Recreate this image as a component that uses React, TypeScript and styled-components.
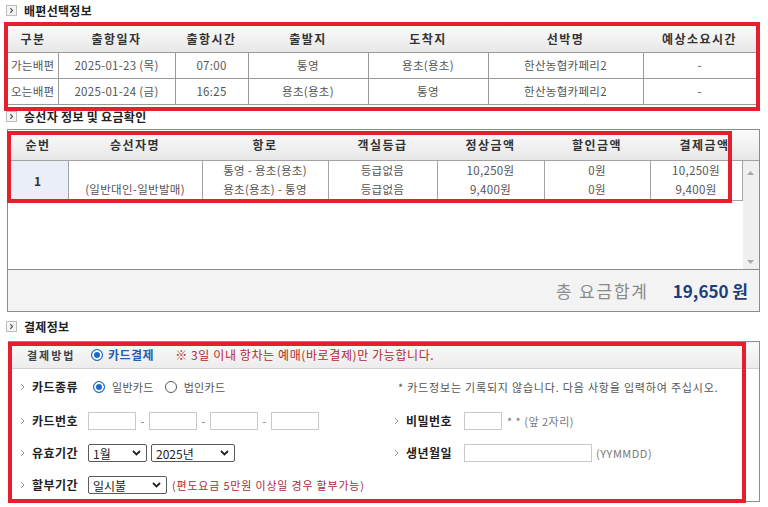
import { createGlobalStyle, styled } from 'styled-components';

const GlobalStyle = createGlobalStyle`
  html, body {
    margin: 0;
    padding: 0;
    background: #fff;
  }
  body {
    font-family: 'Noto Sans CJK KR', 'Noto Sans', sans-serif;
    color: #444;
  }
  * {
    box-sizing: border-box;
  }
`;

const scheduleHeads = ['구분', '출항일자', '출항시간', '출발지', '도착지', '선박명', '예상소요시간'];
const scheduleCols = [50, 117, 73, 120, 120, 155, 113];
const schedules = [
  ['가는배편', '2025-01-23 (목)', '07:00', '통영', '용초(용초)', '한산농협카페리2', '-'],
  ['오는배편', '2025-01-24 (금)', '16:25', '용초(용초)', '통영', '한산농협카페리2', '-'],
];

const fareHeads = ['순번', '승선자명', '항로', '객실등급', '정상금액', '할인금액', '결제금액'];
const fareCols = [60, 134, 126, 109, 107, 106, 92];
const fareLegs = [
  { route: '통영 - 용초(용초)', grade: '등급없음', normal: '10,250원', discount: '0원', pay: '10,250원' },
  { route: '용초(용초) - 통영', grade: '등급없음', normal: '9,400원', discount: '0원', pay: '9,400원' },
];

const TitleIcon = () => (
  <svg width="11" height="11" viewBox="0 0 11 11">
    <rect x="0.5" y="0.5" width="10" height="10" fill="#f5f5f5" stroke="#bcbcbc" />
    <path d="M4.3 3.2 L6.5 5.5 L4.3 7.8" fill="none" stroke="#555" strokeWidth="1.2" />
  </svg>
);

const Chevron = () => (
  <svg width="5" height="8" viewBox="0 0 5 8">
    <path d="M1 1 L4 4 L1 7" fill="none" stroke="#9a9a9a" strokeWidth="1" />
  </svg>
);

const SelectArrow = () => (
  <svg width="9" height="6" viewBox="0 0 9 6">
    <path d="M1 1 L4.5 4.5 L8 1" fill="none" stroke="#222" strokeWidth="1.8" />
  </svg>
);

const ScrollArrow = ({ down }: { down?: boolean }) => (
  <svg width="7" height="4" viewBox="0 0 7 4">
    <path d={down ? 'M0 0 L7 0 L3.5 4 Z' : 'M0 4 L7 4 L3.5 0 Z'} fill="#a9a9a9" />
  </svg>
);

const App = () => {
  return (
    <Page>
      <GlobalStyle />

      <SectionTitle $mt={1} $mb={3}>
        <TitleIcon />
        배편선택정보
      </SectionTitle>
      <RedFrame>
        <Grid>
          <colgroup>
            {scheduleCols.map((w, i) => (
              <col key={i} style={{ width: w }} />
            ))}
          </colgroup>
          <thead>
            <tr>
              {scheduleHeads.map((h) => (
                <HeadCell key={h} $height={26}>
                  {h}
                </HeadCell>
              ))}
            </tr>
          </thead>
          <tbody>
            {schedules.map((row) => (
              <tr key={row[0]}>
                {row.map((v, i) => (
                  <ScheduleCell key={i}>{v}</ScheduleCell>
                ))}
              </tr>
            ))}
          </tbody>
        </Grid>
      </RedFrame>

      <SectionTitle $mt={-3} $mb={3}>
        <TitleIcon />
        승선자 정보 및 요금확인
      </SectionTitle>
      <FareBox>
        <FareHead>
          <Grid>
            <colgroup>
              {fareCols.slice(0, 6).map((w, i) => (
                <col key={i} style={{ width: w }} />
              ))}
              <col />
            </colgroup>
            <thead>
              <tr>
                {fareHeads.map((h) => (
                  <HeadCell key={h} $height={30} $plain>
                    {h}
                  </HeadCell>
                ))}
              </tr>
            </thead>
          </Grid>
        </FareHead>
        <FareBody>
          <FareScroll>
            <Grid>
              <colgroup>
                {fareCols.map((w, i) => (
                  <col key={i} style={{ width: w }} />
                ))}
              </colgroup>
              <tbody>
                <tr>
                  <FareCell $seq>1</FareCell>
                  <FareCell>
                    <Line />
                    <Line>(일반대인-일반발매)</Line>
                  </FareCell>
                  <FareCell>
                    {fareLegs.map((l) => (
                      <Line key={l.route}>{l.route}</Line>
                    ))}
                  </FareCell>
                  <FareCell>
                    {fareLegs.map((l, i) => (
                      <Line key={i}>{l.grade}</Line>
                    ))}
                  </FareCell>
                  <FareCell>
                    {fareLegs.map((l, i) => (
                      <Line key={i}>{l.normal}</Line>
                    ))}
                  </FareCell>
                  <FareCell>
                    {fareLegs.map((l, i) => (
                      <Line key={i}>{l.discount}</Line>
                    ))}
                  </FareCell>
                  <FareCell>
                    {fareLegs.map((l, i) => (
                      <Line key={i}>{l.pay}</Line>
                    ))}
                  </FareCell>
                </tr>
              </tbody>
            </Grid>
          </FareScroll>
          <ScrollBar>
            <ScrollArrow />
            <ScrollArrow down />
          </ScrollBar>
        </FareBody>
        <FareTotal>
          <TotalLabel>총 요금합계</TotalLabel>
          <TotalAmount>19,650 원</TotalAmount>
        </FareTotal>
        <Highlight $top={1} $left={-1} $width={725} $height={72} />
      </FareBox>

      <SectionTitle $mt={6} $mb={5}>
        <TitleIcon />
        결제정보
      </SectionTitle>
      <PayBox>
        <MethodRow>
          <MethodLabel>결제방법</MethodLabel>
          <RadioMark $checked />
          <MethodName>카드결제</MethodName>
          <Warning>※ 3일 이내 항차는 예매(바로결제)만 가능합니다.</Warning>
        </MethodRow>
        <FormGrid>
          <FieldCell $pad={11}>
            <FieldLabel $width={68}>
              <Chevron />
              카드종류
            </FieldLabel>
            <RadioOption $gap={5}>
              <RadioMark $checked />
              일반카드
            </RadioOption>
            <RadioOption $gap={11}>
              <RadioMark />
              법인카드
            </RadioOption>
          </FieldCell>
          <FieldCell $pad={4}>
            <Note>* 카드정보는 기록되지 않습니다. 다음 사항을 입력하여 주십시오.</Note>
          </FieldCell>

          <FieldCell $pad={11}>
            <FieldLabel $width={68}>
              <Chevron />
              카드번호
            </FieldLabel>
            <InputGroup>
              <TextInput $width={48} />
              <Dash>-</Dash>
              <TextInput $width={48} />
              <Dash>-</Dash>
              <TextInput $width={48} />
              <Dash>-</Dash>
              <TextInput $width={48} />
            </InputGroup>
          </FieldCell>
          <FieldCell $pad={0}>
            <FieldLabel $width={70}>
              <Chevron />
              비밀번호
            </FieldLabel>
            <TextInput $width={38} />
            <Hint $gap={5}>* * (앞 2자리)</Hint>
          </FieldCell>

          <FieldCell $pad={11}>
            <FieldLabel $width={68}>
              <Chevron />
              유효기간
            </FieldLabel>
            <InputGroup>
              <SelectBox $width={59}>
                <SelectInput defaultValue="1">
                  <option value="1">1월</option>
                </SelectInput>
                <SelectArrow />
              </SelectBox>
              <SelectBox $width={84}>
                <SelectInput defaultValue="2025">
                  <option value="2025">2025년</option>
                </SelectInput>
                <SelectArrow />
              </SelectBox>
            </InputGroup>
          </FieldCell>
          <FieldCell $pad={0}>
            <FieldLabel $width={70}>
              <Chevron />
              생년월일
            </FieldLabel>
            <TextInput $width={128} />
            <Hint $gap={4}>(YYMMDD)</Hint>
          </FieldCell>

          <FieldCell $pad={11}>
            <FieldLabel $width={68}>
              <Chevron />
              할부기간
            </FieldLabel>
            <SelectBox $width={79}>
              <SelectInput defaultValue="0">
                <option value="0">일시불</option>
              </SelectInput>
              <SelectArrow />
            </SelectBox>
            <InstallNote>(편도요금 5만원 이상일 경우 할부가능)</InstallNote>
          </FieldCell>
          <FieldCell $pad={0} />
        </FormGrid>
        <Highlight $top={0} $left={-1} $width={738} $height={161} />
      </PayBox>
    </Page>
  );
};

export default App;

const Page = styled.div`
  width: 768px;
  padding-bottom: 6px;
`;

const SectionTitle = styled.h2<{ $mt: number; $mb: number }>`
  display: flex;
  align-items: center;
  gap: 7px;
  height: 18px;
  margin: ${(p) => p.$mt}px 0 ${(p) => p.$mb}px;
  padding-left: 6px;
  font-size: 12px;
  font-weight: 700;
  letter-spacing: 0.3px;
  color: #222;
`;

const RedFrame = styled.div`
  position: relative;
  z-index: 1;
  margin: 0 8px 0 4px;
  padding-bottom: 2px;
  border: 4px solid #e3202b;
`;

const Grid = styled.table`
  width: 100%;
  border-collapse: collapse;
  table-layout: fixed;
`;

const HeadCell = styled.th<{ $height: number; $plain?: boolean }>`
  height: ${(p) => p.$height}px;
  padding: 0;
  font-size: 12px;
  font-weight: 700;
  letter-spacing: 1.5px;
  color: #333;
  text-align: center;
  background: ${(p) => (p.$plain ? 'transparent' : 'linear-gradient(#fbfbfb, #e7e7e7)')};
  border-bottom: ${(p) => (p.$plain ? 'none' : '1px solid #9a9a9a')};
`;

const ScheduleCell = styled.td`
  height: 26px;
  padding: 0;
  font-size: 11.5px;
  letter-spacing: 0.3px;
  color: #555;
  text-align: center;
  border-bottom: 1px solid #9a9a9a;
  border-left: 1px solid #9a9a9a;

  &:first-child {
    border-left: none;
  }
`;

const FareBox = styled.div`
  position: relative;
  margin: 0 8px 0 7px;
  border: 1px solid #8c8c8c;
`;

const FareHead = styled.div`
  height: 31px;
  background: linear-gradient(#fbfbfb, #e7e7e7);
  border-bottom: 1px solid #a3a3a3;
`;

const FareBody = styled.div`
  display: flex;
  height: 108px;
`;

const FareScroll = styled.div`
  flex: 1;
`;

const FareCell = styled.td<{ $seq?: boolean }>`
  height: 40px;
  padding: 0;
  text-align: center;
  vertical-align: middle;
  font-size: ${(p) => (p.$seq ? 12 : 11.5)}px;
  letter-spacing: 0.3px;
  font-weight: ${(p) => (p.$seq ? 700 : 400)};
  color: ${(p) => (p.$seq ? '#333' : '#555')};
  background: ${(p) => (p.$seq ? '#e9eef7' : '#fff')};
  border-right: 1px solid #a3a3a3;
  border-bottom: 1px solid #a3a3a3;
`;

const Line = styled.div`
  height: 19px;
  line-height: 19px;
`;

const ScrollBar = styled.div`
  width: 17px;
  display: flex;
  flex-direction: column;
  justify-content: space-between;
  align-items: center;
  padding: 10px 0 5px;
  background: #f0f0f0;
`;

const FareTotal = styled.div`
  display: flex;
  align-items: center;
  justify-content: flex-end;
  gap: 24px;
  height: 42px;
  padding-right: 11px;
  background: #f3f3f3;
  border-top: 1px solid #8c8c8c;
`;

const TotalLabel = styled.span`
  font-size: 17px;
  letter-spacing: 1.8px;
  color: #8a8a8a;
`;

const TotalAmount = styled.span`
  font-size: 17px;
  font-weight: 700;
  color: #1c3f78;
`;

const Highlight = styled.div<{ $top: number; $left: number; $width: number; $height: number }>`
  position: absolute;
  top: ${(p) => p.$top}px;
  left: ${(p) => p.$left}px;
  width: ${(p) => p.$width}px;
  height: ${(p) => p.$height}px;
  border: 4px solid #e3202b;
  pointer-events: none;
`;

const PayBox = styled.div`
  position: relative;
  margin: 0 8px;
  border: 1px solid #8c8c8c;
`;

const MethodRow = styled.div`
  display: flex;
  align-items: center;
  height: 27px;
  padding-left: 18px;
  background: linear-gradient(#fbfbfb, #ececec);
  border-bottom: 1px solid #d2d2d2;
`;

const MethodLabel = styled.span`
  width: 64px;
  font-size: 11px;
  font-weight: 700;
  letter-spacing: 2px;
  color: #444;
`;

const MethodName = styled.span`
  margin-left: 5px;
  font-size: 12px;
  font-weight: 700;
  letter-spacing: 0.5px;
  color: #1f5fae;
`;

const Warning = styled.span`
  margin-left: 21px;
  font-size: 12px;
  letter-spacing: 0.6px;
  color: #b8262c;
`;

const RadioMark = styled.span<{ $checked?: boolean }>`
  display: inline-block;
  flex: none;
  width: 12px;
  height: 12px;
  border-radius: 50%;
  border: 1px solid ${(p) => (p.$checked ? '#1b6ac9' : '#555')};
  background: ${(p) => (p.$checked ? '#1b6ac9' : '#fff')};
  box-shadow: ${(p) => (p.$checked ? 'inset 0 0 0 2px #fff' : 'none')};
`;

const FormGrid = styled.div`
  display: grid;
  grid-template-columns: 385px 1fr;
  grid-template-rows: 36px 32px 32px 32px;
`;

const FieldCell = styled.div<{ $pad: number }>`
  display: flex;
  align-items: center;
  padding-left: ${(p) => p.$pad}px;
`;

const FieldLabel = styled.span<{ $width: number }>`
  display: flex;
  align-items: center;
  gap: 7px;
  flex: none;
  width: ${(p) => p.$width}px;
  font-size: 12px;
  font-weight: 700;
  letter-spacing: 0.5px;
  color: #222;
`;

const RadioOption = styled.label<{ $gap: number }>`
  display: flex;
  align-items: center;
  gap: 7px;
  margin-left: ${(p) => p.$gap}px;
  font-size: 11px;
  letter-spacing: 0.3px;
  color: #555;
`;

const Note = styled.span`
  font-size: 11px;
  letter-spacing: 0.8px;
  color: #555;
`;

const InputGroup = styled.div`
  display: flex;
  align-items: center;
  gap: 4px;
`;

const TextInput = styled.input<{ $width: number }>`
  width: ${(p) => p.$width}px;
  height: 18px;
  padding: 0 3px;
  border: 1px solid #c9c9c9;
  border-radius: 0;
  font-size: 11px;
  outline: none;
`;

const Dash = styled.span`
  width: 5px;
  text-align: center;
  font-size: 11px;
  color: #777;
`;

const Hint = styled.span<{ $gap: number }>`
  margin-left: ${(p) => p.$gap}px;
  font-size: 11px;
  letter-spacing: 0.5px;
  color: #777;
`;

const SelectBox = styled.label<{ $width: number }>`
  display: flex;
  align-items: center;
  width: ${(p) => p.$width}px;
  height: 18px;
  padding: 0 5px 0 4px;
  border: 1px solid #5a5a5a;
  border-radius: 2px;
  background: #fff;
`;

const SelectInput = styled.select`
  flex: 1;
  min-width: 0;
  height: 100%;
  padding: 0;
  border: none;
  background: transparent;
  appearance: none;
  outline: none;
  font-family: inherit;
  font-size: 12px;
  color: #222;
`;

const InstallNote = styled.span`
  margin-left: 5px;
  font-size: 11px;
  letter-spacing: 0.8px;
  color: #b0283a;
`;
